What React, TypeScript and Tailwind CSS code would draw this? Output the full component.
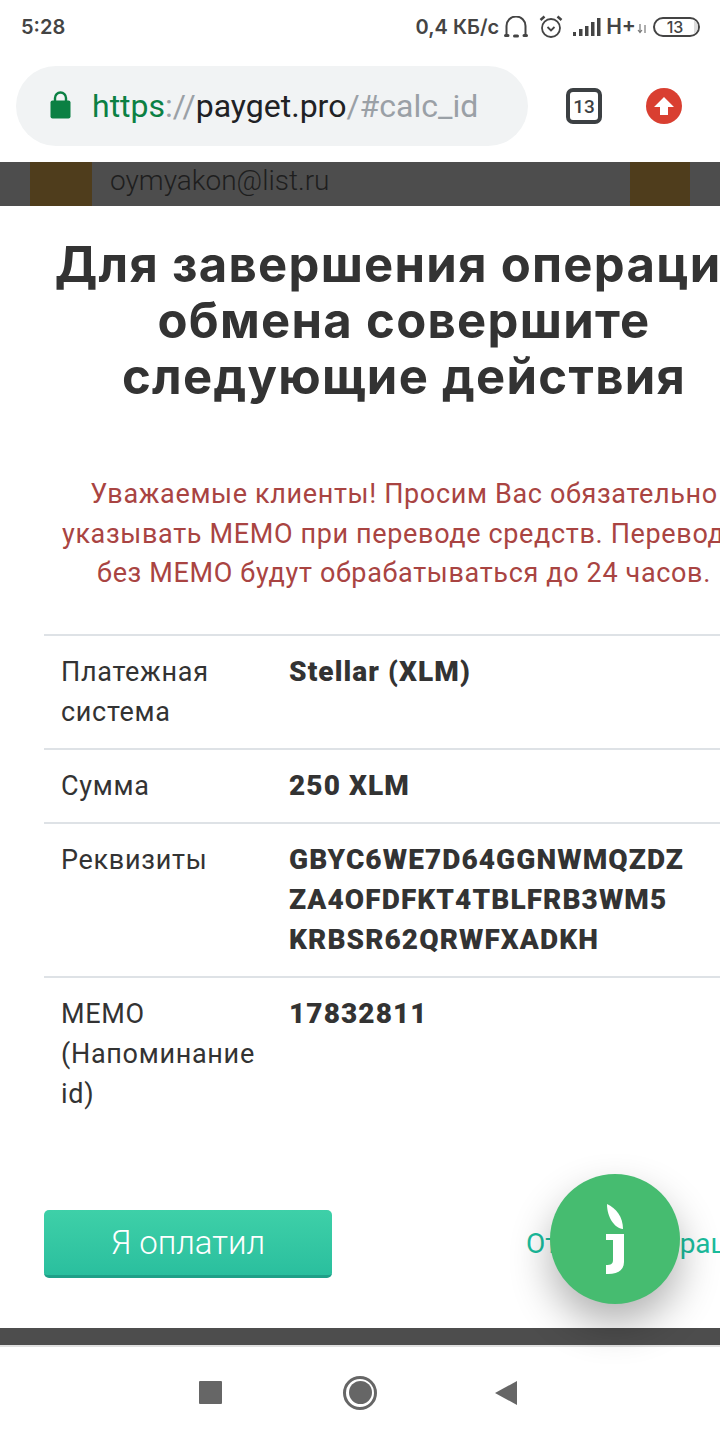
import React from "react";

function StatusBar() {
  return (
    <div className="h-[54px] shrink-0 bg-white flex items-center justify-between pl-[21px] pr-[20px] text-[#444] font-['Inter',sans-serif] font-semibold">
      <span className="text-[20px] leading-none">5:28</span>
      <div className="flex items-center text-[20px]">
        <span className="whitespace-nowrap">0,4 КБ/с</span>
        <svg width="24" height="22" viewBox="0 0 24 22" className="ml-[5px]" fill="none" stroke="#444" strokeWidth="2">
          <path d="M2.500 18V10a9.500 9.500 0 0 1 19 0v8" />
          <path d="M1.500 19.500h2.500M20 19.500h2.500M10.500 20h3" strokeWidth="3" strokeLinecap="round" />
        </svg>
        <svg width="26" height="26" viewBox="0 0 26 26" className="ml-[10px]" fill="none" stroke="#444" strokeWidth="1.800">
          <circle cx="13" cy="14" r="9" />
          <path d="M9.500 13l3.500 3.500 3.500-3.500" />
          <path d="M2.500 6l4-3.500M23.500 6l-4-3.500" strokeWidth="2.500" />
        </svg>
        <svg width="28" height="20" viewBox="0 0 28 20" className="ml-[9px]" fill="#444">
          <rect x="0" y="15" width="3" height="4" />
          <rect x="6" y="12" width="3.500" height="7" />
          <rect x="12" y="9" width="3.500" height="10" />
          <rect x="18" y="5" width="3.500" height="14" />
          <rect x="24" y="1" width="3.500" height="18" />
        </svg>
        <span className="ml-[5px] text-[21px]">H+</span>
        <svg width="11" height="10" viewBox="0 0 11 10" className="self-end mb-[9px] ml-[1px]" fill="none" stroke="#777" strokeWidth="1.200">
          <path d="M3 0v8M1 6l2 2.500L5 6M8 9V1" />
        </svg>
        <div className="ml-[5px] w-[47px] h-[20px] rounded-full border-2 border-[#444] flex items-center justify-center relative overflow-hidden">
          <span className="text-[16px] font-medium leading-none -ml-[3px]">13</span>
          <div className="absolute right-0 top-0 bottom-0 w-[4px] bg-[#ddd]" />
        </div>
      </div>
    </div>
  );
}

function UrlBar() {
  return (
    <div className="h-[108px] shrink-0 bg-white flex items-start pt-[12px] pl-[16px]">
      <div className="w-[512px] h-[80px] rounded-full bg-[#f1f3f4] flex items-center pl-[34px]">
        <svg width="22" height="28" viewBox="0 0 22 28" fill="#0b8043" className="mb-[3px]">
          <rect x="0.500" y="9.500" width="20" height="18" rx="2" />
          <path d="M5 10V7a5.500 5.500 0 0 1 11 0v3" fill="none" stroke="#0b8043" strokeWidth="2.400" />
        </svg>
        <div className="ml-[20px] text-[32px] font-['Roboto',sans-serif] whitespace-nowrap leading-none">
          <span className="text-[#0b8043]">https</span>
          <span className="text-[#9aa0a6]">://</span>
          <span className="text-[#202124]">payget.pro</span>
          <span className="text-[#9aa0a6]">/#calc_id</span>
        </div>
      </div>
      <div className="ml-[38px] mt-[22px] w-[36px] h-[36px] rounded-[7px] border-[4px] border-[#3c4043] flex items-center justify-center">
        <span className="text-[19px] font-medium text-[#3c4043] font-['Roboto',sans-serif] leading-none">13</span>
      </div>
      <div className="ml-[44px] mt-[22px] w-[36px] h-[36px] rounded-full bg-[#d93f31] flex items-center justify-center">
        <svg width="22" height="22" viewBox="0 0 22 22" fill="#fff">
          <path d="M11 2L21 12H15V20H7V12H1Z" />
        </svg>
      </div>
    </div>
  );
}

function Row({ label, children, className = "" }: { label: React.ReactNode; children: React.ReactNode; className?: string }) {
  return (
    <div className={`flex border-t-2 border-[#dee2e6] pt-[16px] ${className}`}>
      <div className="w-[245px] pl-[17px] shrink-0 text-[#333] text-[27px] tracking-[0.7px] leading-[40px] font-['Roboto',sans-serif]">{label}</div>
      <div className="text-[#333] text-[28px] tracking-[1.1px] leading-[40px] font-black font-['Roboto',sans-serif] whitespace-pre-line">{children}</div>
    </div>
  );
}

export default function App() {
  return (
    <div className="w-[720px] h-[1440px] overflow-hidden bg-white flex flex-col">
      <StatusBar />
      <UrlBar />
      <div className="h-[44px] shrink-0 bg-[#4d4d4d] pl-[30px] flex">
        <div className="w-[62px] bg-[#4f3d1c]" />
        <div className="w-[538px] pl-[18px] text-[28px] leading-[38px] text-[#1e1e1e] font-['Roboto',sans-serif] font-light">oymyakon@list.ru</div>
        <div className="w-[60px] bg-[#4f3d1c]" />
      </div>
      <div className="h-[1122px] shrink-0 w-[808px] bg-white rounded-tl-[4px] rounded-bl-[4px] px-[44px] relative">
        <h1 className="mt-[31px] text-center text-[#333] text-[49px] tracking-[1.3px] leading-[56px] font-bold font-['Inter',sans-serif] whitespace-nowrap">
          Для завершения операции
          <br />
          обмена совершите
          <br />
          следующие действия
        </h1>
        <p className="mt-[70px] text-center text-[#a94442] text-[27px] tracking-[0.65px] leading-[39.500px] font-['Roboto',sans-serif] whitespace-nowrap">
          Уважаемые клиенты! Просим Вас обязательно
          <br />
          указывать МЕМО при переводе средств. Переводы
          <br />
          без МЕМО будут обрабатываться до 24 часов.
        </p>
        <div className="mt-[40.500px]">
          <Row label={<>Платежная<br />система</>} className="pb-[16px]">Stellar (XLM)</Row>
          <Row label="Сумма" className="pb-[16px]">250 XLM</Row>
          <Row label="Реквизиты" className="pb-[16px]">{"GBYC6WE7D64GGNWMQZDZ\nZA4OFDFKT4TBLFRB3WM5\nKRBSR62QRWFXADKH"}</Row>
          <Row label={<>МЕМО<br />(Напоминание<br />id)</>}>17832811</Row>
        </div>
        <div className="mt-[96px] flex items-center">
          <button className="shrink-0 w-[288px] h-[68px] rounded-[5px] bg-gradient-to-b from-[#3ed0a8] to-[#2abf9e] border-b-[3px] border-[#1fa088] text-white text-[33px] font-light font-['Roboto',sans-serif]">
            Я оплатил
          </button>
          <span className="ml-[194px] text-[#1abc9c] text-[28px] font-['Roboto',sans-serif] whitespace-nowrap">Отмена операции</span>
        </div>
        <div className="absolute left-[550px] top-[968px] w-[130px] h-[130px] rounded-full bg-[#46bc70] shadow-[0_20px_40px_rgba(0,0,0,0.3)] flex items-center justify-center">
          <svg width="18" height="70" viewBox="0 0 18 70">
            <path d="M1 0C10 4 17 13 17 25C8 24 1 13 1 0Z" fill="#fff" />
            <path d="M0 30H18V58C18 66 12 70 2 70H0V61C5 61 7 60 7 56V36H0Z" fill="#fff" />
          </svg>
        </div>
      </div>
      <div className="h-[17px] shrink-0 bg-[#4d4d4d]" />
      <div className="h-[95px] shrink-0 bg-white border-t-2 border-[#e0e0e0] flex items-center pl-[199px] pb-[2px]">
        <div className="w-[23px] h-[23px] bg-[#666] rounded-[1px]" />
        <div className="ml-[121px] w-[34px] h-[34px] rounded-full border-[3px] border-[#666] flex items-center justify-center">
          <div className="w-[23px] h-[23px] rounded-full bg-[#666]" />
        </div>
        <svg width="24" height="26" viewBox="0 0 24 26" className="ml-[117px]" fill="#666">
          <path d="M23 1V25L1 13Z" />
        </svg>
      </div>
    </div>
  );
}
